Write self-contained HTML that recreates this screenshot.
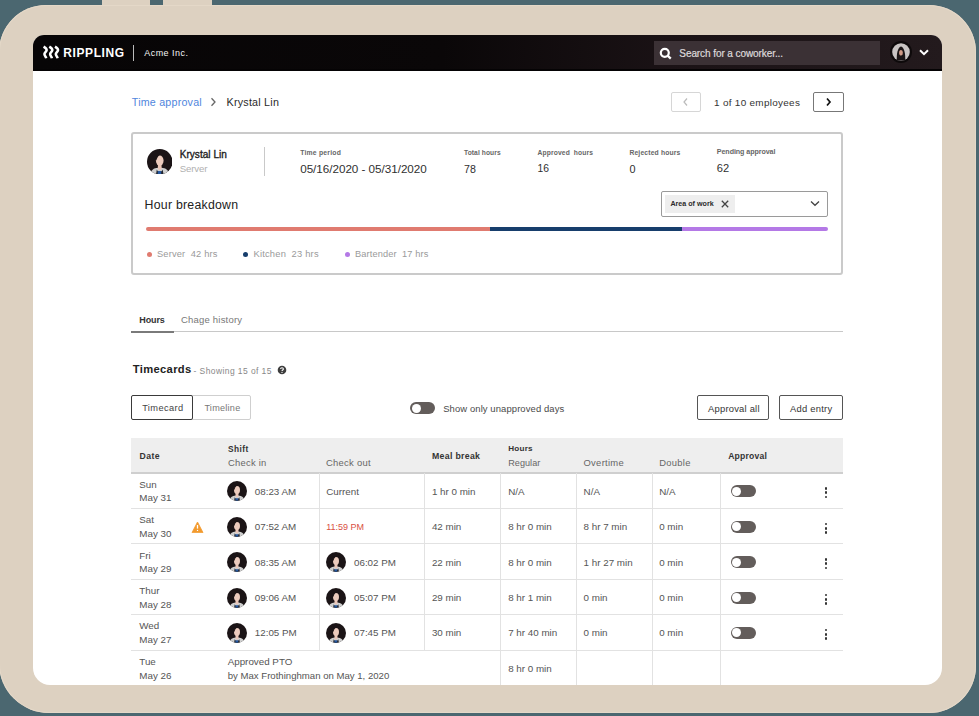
<!DOCTYPE html>
<html><head><meta charset="utf-8">
<style>
html,body{margin:0;padding:0;}
body{width:979px;height:716px;overflow:hidden;position:relative;background:#4b6770;font-family:"Liberation Sans",sans-serif;}
.a{position:absolute;}
.t{position:absolute;white-space:nowrap;font-family:"Liberation Sans",sans-serif;}
.frame{position:absolute;left:-1px;top:5px;width:977px;height:708px;background:#ddd1c1;border-radius:47px 47px 47px 50px;box-shadow:inset 0 0 0 1px #e4d8c8;}
.bump{position:absolute;top:-4px;height:14px;background:#ddd1c1;border-radius:3px;}
.screen{position:absolute;left:33px;top:35px;width:909px;height:650px;background:#fff;border-radius:11px 11px 17px 17px;overflow:hidden;}
.hdr{position:absolute;left:33px;top:35px;width:909px;height:36px;border-radius:11px 11px 0 0;background:linear-gradient(90deg,#070506 0%,#0a0708 45%,#1a1215 70%,#231a1d 100%);border-bottom:0;}
.hline{position:absolute;left:33px;top:69px;width:909px;height:2px;background:#050304;}
.search{position:absolute;left:654px;top:41px;width:226px;height:24px;background:#3b3135;}
.btn{position:absolute;border:1.5px solid #555;border-radius:2px;box-sizing:border-box;background:#fff;}
.card{position:absolute;left:131px;top:132px;width:712px;height:143px;border:2px solid #cacaca;box-sizing:border-box;border-radius:3px;}
.vl{position:absolute;width:1px;background:#e2e2e2;}
.hl{position:absolute;height:1px;background:#e2e2e2;left:131px;width:712px;}
.tog{position:absolute;width:25px;height:12px;border-radius:6px;background:#635d5b;box-sizing:border-box;}
.tog::after{content:"";position:absolute;left:1.5px;top:1.5px;width:9px;height:9px;border-radius:50%;background:#fff;}
.keb{position:absolute;width:3px;height:12px;}
.keb i{position:absolute;left:0;width:2.6px;height:2.6px;border-radius:50%;background:#333;}
</style></head><body>
<div class="bump" style="left:102px;width:48px;"></div>
<div class="bump" style="left:163px;width:49px;"></div>
<div class="frame"></div>
<div class="screen"></div>
<div class="hdr"></div>
<div class="hline"></div>
<!-- logo icon -->
<svg class="a" style="left:40px;top:42px" width="24" height="20" viewBox="0 0 24 20">
<g stroke="#fff" stroke-width="2.5" fill="none" stroke-linecap="butt">
<path d="M3.6 4.6 C5.6 5.8 7 7 6.6 8.4 C6.2 9.8 4.4 10.6 4.4 12 C4.4 13.4 5.8 14.4 6.2 16.2"/>
<path d="M9.3 4.6 C11.3 5.8 12.7 7 12.3 8.4 C11.9 9.8 10.1 10.6 10.1 12 C10.1 13.4 11.5 14.4 11.9 16.2"/>
<path d="M15 4.6 C17 5.8 18.4 7 18 8.4 C17.6 9.8 15.8 10.6 15.8 12 C15.8 13.4 17.2 14.4 17.6 16.2"/>
</g>
</svg>
<div class="a" style="left:133px;top:45px;width:1.3px;height:16px;background:#bbb;"></div>
<div class="search"></div>
<svg class="a" style="left:659px;top:47px" width="14" height="13" viewBox="0 0 14 13">
<circle cx="5.8" cy="5.8" r="4" stroke="#fff" stroke-width="2.2" fill="none"/>
<path d="M8.6 8.6 L11.8 11.6" stroke="#fff" stroke-width="2.2"/>
</svg>
<!-- header avatar -->
<svg class="a" style="left:890px;top:41px" width="22" height="22" viewBox="0 0 22 22">
<circle cx="11" cy="11" r="11" fill="#0e0a0b"/>
<circle cx="11" cy="11" r="8.8" fill="#c9c4c3"/>
<path d="M6.8 19.5 C6.5 13 7.5 6.5 11 5.5 C14.5 6.5 15.5 13 15.2 19.5 Z" fill="#1b1516"/>
<ellipse cx="11" cy="11.8" rx="1.9" ry="2.8" fill="#cf9a86"/>
</svg>
<svg class="a" style="left:918px;top:48px" width="12" height="9" viewBox="0 0 12 9">
<path d="M2 2.2 L6 6.2 L10 2.2" stroke="#fff" stroke-width="2" fill="none"/>
</svg>

<!-- breadcrumb chevron -->
<svg class="a" style="left:209px;top:97px" width="9" height="10" viewBox="0 0 9 10">
<path d="M2.5 1.2 L6 5 L2.5 8.8" stroke="#666" stroke-width="1.3" fill="none"/>
</svg>
<!-- pagination -->
<div class="btn" style="left:671px;top:92px;width:30px;height:20px;border:1.3px solid #d6d6d6;"></div>
<svg class="a" style="left:681px;top:97px" width="9" height="10" viewBox="0 0 9 10">
<path d="M6 1.5 L3 5 L6 8.5" stroke="#bbb" stroke-width="1.2" fill="none"/>
</svg>
<div class="btn" style="left:813px;top:92px;width:31px;height:20px;border:1.3px solid #777;"></div>
<svg class="a" style="left:824px;top:97px" width="9" height="10" viewBox="0 0 9 10">
<path d="M3 1.5 L6 5 L3 8.5" stroke="#111" stroke-width="1.7" fill="none"/>
</svg>

<!-- card -->
<div class="card"></div>
<svg class="a" style="left:146.5px;top:148.5px" width="25.5" height="25.5" viewBox="0 0 26 26">
<defs><clipPath id="cc"><circle cx="13" cy="13" r="13"/></clipPath></defs>
<g clip-path="url(#cc)">
<rect width="26" height="26" fill="#1b1416"/>
<path d="M3 27 C4 20 8 19 13 19 C18 19 22 20 23 27 Z" fill="#cfcfcf"/>
<path d="M10 21 C11 24 15 24 16 21 L17 27 L9 27 Z" fill="#22252e"/>
<rect x="11" y="22.5" width="3.5" height="3" fill="#2457a0"/>
<path d="M11.2 15 L14.8 15 L15 20.5 C14 21.5 12 21.5 11 20.5 Z" fill="#eac6b8"/>
<ellipse cx="13" cy="11.8" rx="3.9" ry="5.2" fill="#eccbbd"/>
<path d="M9 9 C9.5 6 12 5.3 13.5 5.5 C11 7 10.5 9 9.3 12 Z" fill="#1b1416"/>
</g>
</svg>
<div class="a" style="left:264px;top:147px;width:1.3px;height:29px;background:#c9c9c9;"></div>
<!-- dropdown -->
<div class="btn" style="left:661px;top:191px;width:167px;height:26px;border:1.3px solid #9a9a9a;"></div>
<div class="a" style="left:665px;top:195px;width:70px;height:18px;background:#eeeeee;"></div>
<svg class="a" style="left:720px;top:199px" width="10" height="10" viewBox="0 0 10 10">
<path d="M1.8 1.8 L8.2 8.2 M8.2 1.8 L1.8 8.2" stroke="#444" stroke-width="1.3"/>
</svg>
<svg class="a" style="left:809px;top:199px" width="12" height="9" viewBox="0 0 12 9">
<path d="M2 2.5 L6 6.3 L10 2.5" stroke="#444" stroke-width="1.3" fill="none"/>
</svg>
<!-- bar -->
<div class="a" style="left:146px;top:227px;width:345px;height:4px;background:#e07b70;border-radius:2px 0 0 2px;"></div>
<div class="a" style="left:490px;top:227px;width:192px;height:4px;background:#173e6c;"></div>
<div class="a" style="left:682px;top:227px;width:146px;height:4px;background:#b479e6;border-radius:0 2px 2px 0;"></div>
<div class="a" style="left:147px;top:252px;width:5px;height:5px;border-radius:50%;background:#e07b70;"></div>
<div class="a" style="left:243px;top:252px;width:5px;height:5px;border-radius:50%;background:#173e6c;"></div>
<div class="a" style="left:345px;top:252px;width:5px;height:5px;border-radius:50%;background:#b479e6;"></div>

<!-- tabs -->
<div class="a" style="left:131px;top:331px;width:712px;height:1px;background:#c8c8c8;"></div>
<div class="a" style="left:131px;top:330.5px;width:43px;height:2px;background:#7a7a7a;"></div>

<!-- help icon -->
<svg class="a" style="left:277px;top:365px" width="10" height="10" viewBox="0 0 10 10">
<circle cx="5" cy="5" r="4.3" fill="#3d3d3d"/>
<path d="M3.6 4 C3.6 2.4 6.4 2.4 6.4 4 C6.4 5 5 5 5 6" stroke="#fff" stroke-width="1.1" fill="none"/>
<circle cx="5" cy="7.4" r="0.6" fill="#fff"/>
</svg>

<!-- segmented -->
<div class="btn" style="left:131px;top:395px;width:120px;height:25px;border:1.3px solid #cfcfcf;"></div>
<div class="btn" style="left:131px;top:395px;width:62px;height:25px;border:1.7px solid #3a3a3a;"></div>
<!-- toggle -->
<div class="tog" style="left:410px;top:402px;"></div>
<!-- buttons -->
<div class="btn" style="left:697px;top:395px;width:72px;height:25px;"></div>
<div class="btn" style="left:779px;top:395px;width:64px;height:25px;"></div>

<!-- table -->
<div class="a" style="left:131px;top:438px;width:712px;height:34px;background:#eeeeee;"></div>
<div class="a" style="left:131px;top:472px;width:712px;height:1.5px;background:#cfcfcf;"></div>
<div class="hl" style="top:507.9px;"></div>
<div class="hl" style="top:543.1px;"></div>
<div class="hl" style="top:578.7px;"></div>
<div class="hl" style="top:613.8px;"></div>
<div class="hl" style="top:649.5px;"></div>
<div class="vl" style="left:318.5px;top:473px;height:177px;"></div>
<div class="vl" style="left:423.5px;top:473px;height:177px;"></div>
<div class="vl" style="left:499.5px;top:473px;height:177px;"></div>
<div class="vl" style="left:575.5px;top:473px;height:177px;"></div>
<div class="vl" style="left:651.5px;top:473px;height:177px;"></div>
<div class="vl" style="left:719.5px;top:473px;height:177px;"></div>
<div class="vl" style="left:499.5px;top:650px;height:35px;"></div>
<div class="vl" style="left:575.5px;top:650px;height:35px;"></div>
<div class="vl" style="left:651.5px;top:650px;height:35px;"></div>
<div class="vl" style="left:719.5px;top:650px;height:35px;"></div>
<svg class="a" style="left:227px;top:481.0px" width="20" height="20" viewBox="0 0 26 26"><defs><clipPath id="ca0"><circle cx="13" cy="13" r="13"/></clipPath></defs><g clip-path="url(#ca0)"><rect width="26" height="26" fill="#1b1416"/><path d="M3 27 C4 20 8 19 13 19 C18 19 22 20 23 27 Z" fill="#cfcfcf"/><path d="M10 21 C11 24 15 24 16 21 L17 27 L9 27 Z" fill="#22252e"/><rect x="11" y="22.5" width="3.5" height="3" fill="#2457a0"/><path d="M11.2 15 L14.8 15 L15 20.5 C14 21.5 12 21.5 11 20.5 Z" fill="#eac6b8"/><ellipse cx="13" cy="11.8" rx="3.9" ry="5.2" fill="#eccbbd"/><path d="M9 9 C9.5 6 12 5.3 13.5 5.5 C11 7 10.5 9 9.3 12 Z" fill="#1b1416"/></g></svg>
<div class="tog" style="left:730.5px;top:485.0px;"></div>
<div class="keb" style="left:824.5px;top:487.0px;"><i style="top:0"></i><i style="top:4.3px"></i><i style="top:8.6px"></i></div>
<svg class="a" style="left:227px;top:516.9px" width="20" height="20" viewBox="0 0 26 26"><defs><clipPath id="ca1"><circle cx="13" cy="13" r="13"/></clipPath></defs><g clip-path="url(#ca1)"><rect width="26" height="26" fill="#1b1416"/><path d="M3 27 C4 20 8 19 13 19 C18 19 22 20 23 27 Z" fill="#cfcfcf"/><path d="M10 21 C11 24 15 24 16 21 L17 27 L9 27 Z" fill="#22252e"/><rect x="11" y="22.5" width="3.5" height="3" fill="#2457a0"/><path d="M11.2 15 L14.8 15 L15 20.5 C14 21.5 12 21.5 11 20.5 Z" fill="#eac6b8"/><ellipse cx="13" cy="11.8" rx="3.9" ry="5.2" fill="#eccbbd"/><path d="M9 9 C9.5 6 12 5.3 13.5 5.5 C11 7 10.5 9 9.3 12 Z" fill="#1b1416"/></g></svg>
<div class="tog" style="left:730.5px;top:520.9px;"></div>
<div class="keb" style="left:824.5px;top:522.9px;"><i style="top:0"></i><i style="top:4.3px"></i><i style="top:8.6px"></i></div>
<svg class="a" style="left:227px;top:552.1px" width="20" height="20" viewBox="0 0 26 26"><defs><clipPath id="ca2"><circle cx="13" cy="13" r="13"/></clipPath></defs><g clip-path="url(#ca2)"><rect width="26" height="26" fill="#1b1416"/><path d="M3 27 C4 20 8 19 13 19 C18 19 22 20 23 27 Z" fill="#cfcfcf"/><path d="M10 21 C11 24 15 24 16 21 L17 27 L9 27 Z" fill="#22252e"/><rect x="11" y="22.5" width="3.5" height="3" fill="#2457a0"/><path d="M11.2 15 L14.8 15 L15 20.5 C14 21.5 12 21.5 11 20.5 Z" fill="#eac6b8"/><ellipse cx="13" cy="11.8" rx="3.9" ry="5.2" fill="#eccbbd"/><path d="M9 9 C9.5 6 12 5.3 13.5 5.5 C11 7 10.5 9 9.3 12 Z" fill="#1b1416"/></g></svg>
<svg class="a" style="left:326px;top:552.1px" width="20" height="20" viewBox="0 0 26 26"><defs><clipPath id="cb2"><circle cx="13" cy="13" r="13"/></clipPath></defs><g clip-path="url(#cb2)"><rect width="26" height="26" fill="#1b1416"/><path d="M3 27 C4 20 8 19 13 19 C18 19 22 20 23 27 Z" fill="#cfcfcf"/><path d="M10 21 C11 24 15 24 16 21 L17 27 L9 27 Z" fill="#22252e"/><rect x="11" y="22.5" width="3.5" height="3" fill="#2457a0"/><path d="M11.2 15 L14.8 15 L15 20.5 C14 21.5 12 21.5 11 20.5 Z" fill="#eac6b8"/><ellipse cx="13" cy="11.8" rx="3.9" ry="5.2" fill="#eccbbd"/><path d="M9 9 C9.5 6 12 5.3 13.5 5.5 C11 7 10.5 9 9.3 12 Z" fill="#1b1416"/></g></svg>
<div class="tog" style="left:730.5px;top:556.1px;"></div>
<div class="keb" style="left:824.5px;top:558.1px;"><i style="top:0"></i><i style="top:4.3px"></i><i style="top:8.6px"></i></div>
<svg class="a" style="left:227px;top:587.7px" width="20" height="20" viewBox="0 0 26 26"><defs><clipPath id="ca3"><circle cx="13" cy="13" r="13"/></clipPath></defs><g clip-path="url(#ca3)"><rect width="26" height="26" fill="#1b1416"/><path d="M3 27 C4 20 8 19 13 19 C18 19 22 20 23 27 Z" fill="#cfcfcf"/><path d="M10 21 C11 24 15 24 16 21 L17 27 L9 27 Z" fill="#22252e"/><rect x="11" y="22.5" width="3.5" height="3" fill="#2457a0"/><path d="M11.2 15 L14.8 15 L15 20.5 C14 21.5 12 21.5 11 20.5 Z" fill="#eac6b8"/><ellipse cx="13" cy="11.8" rx="3.9" ry="5.2" fill="#eccbbd"/><path d="M9 9 C9.5 6 12 5.3 13.5 5.5 C11 7 10.5 9 9.3 12 Z" fill="#1b1416"/></g></svg>
<svg class="a" style="left:326px;top:587.7px" width="20" height="20" viewBox="0 0 26 26"><defs><clipPath id="cb3"><circle cx="13" cy="13" r="13"/></clipPath></defs><g clip-path="url(#cb3)"><rect width="26" height="26" fill="#1b1416"/><path d="M3 27 C4 20 8 19 13 19 C18 19 22 20 23 27 Z" fill="#cfcfcf"/><path d="M10 21 C11 24 15 24 16 21 L17 27 L9 27 Z" fill="#22252e"/><rect x="11" y="22.5" width="3.5" height="3" fill="#2457a0"/><path d="M11.2 15 L14.8 15 L15 20.5 C14 21.5 12 21.5 11 20.5 Z" fill="#eac6b8"/><ellipse cx="13" cy="11.8" rx="3.9" ry="5.2" fill="#eccbbd"/><path d="M9 9 C9.5 6 12 5.3 13.5 5.5 C11 7 10.5 9 9.3 12 Z" fill="#1b1416"/></g></svg>
<div class="tog" style="left:730.5px;top:591.7px;"></div>
<div class="keb" style="left:824.5px;top:593.7px;"><i style="top:0"></i><i style="top:4.3px"></i><i style="top:8.6px"></i></div>
<svg class="a" style="left:227px;top:622.8px" width="20" height="20" viewBox="0 0 26 26"><defs><clipPath id="ca4"><circle cx="13" cy="13" r="13"/></clipPath></defs><g clip-path="url(#ca4)"><rect width="26" height="26" fill="#1b1416"/><path d="M3 27 C4 20 8 19 13 19 C18 19 22 20 23 27 Z" fill="#cfcfcf"/><path d="M10 21 C11 24 15 24 16 21 L17 27 L9 27 Z" fill="#22252e"/><rect x="11" y="22.5" width="3.5" height="3" fill="#2457a0"/><path d="M11.2 15 L14.8 15 L15 20.5 C14 21.5 12 21.5 11 20.5 Z" fill="#eac6b8"/><ellipse cx="13" cy="11.8" rx="3.9" ry="5.2" fill="#eccbbd"/><path d="M9 9 C9.5 6 12 5.3 13.5 5.5 C11 7 10.5 9 9.3 12 Z" fill="#1b1416"/></g></svg>
<svg class="a" style="left:326px;top:622.8px" width="20" height="20" viewBox="0 0 26 26"><defs><clipPath id="cb4"><circle cx="13" cy="13" r="13"/></clipPath></defs><g clip-path="url(#cb4)"><rect width="26" height="26" fill="#1b1416"/><path d="M3 27 C4 20 8 19 13 19 C18 19 22 20 23 27 Z" fill="#cfcfcf"/><path d="M10 21 C11 24 15 24 16 21 L17 27 L9 27 Z" fill="#22252e"/><rect x="11" y="22.5" width="3.5" height="3" fill="#2457a0"/><path d="M11.2 15 L14.8 15 L15 20.5 C14 21.5 12 21.5 11 20.5 Z" fill="#eac6b8"/><ellipse cx="13" cy="11.8" rx="3.9" ry="5.2" fill="#eccbbd"/><path d="M9 9 C9.5 6 12 5.3 13.5 5.5 C11 7 10.5 9 9.3 12 Z" fill="#1b1416"/></g></svg>
<div class="tog" style="left:730.5px;top:626.8px;"></div>
<div class="keb" style="left:824.5px;top:628.8px;"><i style="top:0"></i><i style="top:4.3px"></i><i style="top:8.6px"></i></div>
<svg class="a" style="left:191px;top:521px" width="13" height="12" viewBox="0 0 13 12"><path d="M6.5 1 L12 11.6 L1 11.6 Z" fill="#f29a2e" stroke="#f29a2e" stroke-width="0.8" stroke-linejoin="round"/><path d="M6.5 4 L6.5 7.6" stroke="#fff" stroke-width="1.3"/><circle cx="6.5" cy="9.4" r="0.7" fill="#fff"/></svg>

<div class="t" style="left:63.30px;top:46.55px;font-size:11.99px;line-height:11.99px;font-weight:bold;color:#ffffff;letter-spacing:0.603px;white-space:pre;">RIPPLING</div>
<div class="t" style="left:144.20px;top:48.71px;font-size:8.97px;line-height:8.97px;font-weight:normal;color:#f4f4f4;letter-spacing:0.49px;white-space:pre;">Acme Inc.</div>
<div class="t" style="left:679.30px;top:48.98px;font-size:10.06px;line-height:10.06px;font-weight:normal;color:#dedadb;letter-spacing:-0.1px;white-space:pre;-webkit-text-stroke:0.2px #dedadb;">Search for a coworker...</div>
<div class="t" style="left:131.80px;top:96.95px;font-size:10.69px;line-height:10.69px;font-weight:normal;color:#4f86dd;letter-spacing:0.213px;white-space:pre;">Time approval</div>
<div class="t" style="left:226.60px;top:96.93px;font-size:10.72px;line-height:10.72px;font-weight:normal;color:#2a2a2a;letter-spacing:0.222px;white-space:pre;">Krystal Lin</div>
<div class="t" style="left:714.10px;top:97.58px;font-size:9.95px;line-height:9.95px;font-weight:normal;color:#333;letter-spacing:0.285px;white-space:pre;">1 of 10 employees</div>
<div class="t" style="left:179.70px;top:149.99px;font-size:10.05px;line-height:10.05px;font-weight:normal;color:#222;letter-spacing:0.028px;white-space:pre;-webkit-text-stroke:0.35px #222;">Krystal Lin</div>
<div class="t" style="left:179.70px;top:164.21px;font-size:9.68px;line-height:9.68px;font-weight:normal;color:#b0b0b0;letter-spacing:-0.133px;white-space:pre;">Server</div>
<div class="t" style="left:300.20px;top:149.51px;font-size:6.84px;line-height:6.84px;font-weight:bold;color:#666;letter-spacing:0.21px;white-space:pre;">Time period</div>
<div class="t" style="left:300.20px;top:162.81px;font-size:11.68px;line-height:11.68px;font-weight:normal;color:#2f2f2f;letter-spacing:-0.028px;white-space:pre;">05/16/2020 - 05/31/2020</div>
<div class="t" style="left:464.00px;top:149.66px;font-size:6.66px;line-height:6.66px;font-weight:bold;color:#666;letter-spacing:0.086px;white-space:pre;">Total hours</div>
<div class="t" style="left:464.00px;top:163.69px;font-size:10.64px;line-height:10.64px;font-weight:normal;color:#2f2f2f;letter-spacing:0px;white-space:pre;">78</div>
<div class="t" style="left:537.60px;top:149.62px;font-size:6.71px;line-height:6.71px;font-weight:bold;color:#666;letter-spacing:0.121px;white-space:pre;">Approved  hours</div>
<div class="t" style="left:537.60px;top:163.98px;font-size:10.3px;line-height:10.3px;font-weight:normal;color:#2f2f2f;letter-spacing:0px;white-space:pre;">16</div>
<div class="t" style="left:629.40px;top:149.56px;font-size:6.78px;line-height:6.78px;font-weight:bold;color:#666;letter-spacing:0.161px;white-space:pre;">Rejected hours</div>
<div class="t" style="left:629.40px;top:163.54px;font-size:10.82px;line-height:10.82px;font-weight:normal;color:#2f2f2f;letter-spacing:0px;white-space:pre;">0</div>
<div class="t" style="left:716.80px;top:148.97px;font-size:7.12px;line-height:7.12px;font-weight:bold;color:#666;letter-spacing:-0.065px;white-space:pre;">Pending approval</div>
<div class="t" style="left:716.80px;top:162.57px;font-size:11.14px;line-height:11.14px;font-weight:normal;color:#2f2f2f;letter-spacing:0px;white-space:pre;">62</div>
<div class="t" style="left:144.60px;top:198.69px;font-size:12.3px;line-height:12.3px;font-weight:normal;color:#222;letter-spacing:0.247px;white-space:pre;">Hour breakdown</div>
<div class="t" style="left:670.40px;top:201.47px;font-size:7.12px;line-height:7.12px;font-weight:bold;color:#2a2a2a;letter-spacing:0.017px;white-space:pre;">Area of work</div>
<div class="t" style="left:157.00px;top:249.94px;font-size:9.29px;line-height:9.29px;font-weight:normal;color:#9a9a9a;letter-spacing:0.158px;white-space:pre;white-space:pre;">Server  42 hrs</div>
<div class="t" style="left:253.50px;top:249.88px;font-size:9.36px;line-height:9.36px;font-weight:normal;color:#9a9a9a;letter-spacing:0.196px;white-space:pre;white-space:pre;">Kitchen  23 hrs</div>
<div class="t" style="left:355.10px;top:249.99px;font-size:9.23px;line-height:9.23px;font-weight:normal;color:#9a9a9a;letter-spacing:0.124px;white-space:pre;white-space:pre;">Bartender  17 hrs</div>
<div class="t" style="left:139.30px;top:315.69px;font-size:8.99px;line-height:8.99px;font-weight:bold;color:#333;letter-spacing:-0.115px;white-space:pre;">Hours</div>
<div class="t" style="left:181.00px;top:315.26px;font-size:9.5px;line-height:9.5px;font-weight:normal;color:#777;letter-spacing:0.203px;white-space:pre;">Chage history</div>
<div class="t" style="left:132.80px;top:364.33px;font-size:11.19px;line-height:11.19px;font-weight:bold;color:#222;letter-spacing:0.332px;white-space:pre;">Timecards</div>
<div class="t" style="left:193.60px;top:366.63px;font-size:8.47px;line-height:8.47px;font-weight:normal;color:#888;letter-spacing:0.423px;white-space:pre;">- Showing 15 of 15</div>
<div class="t" style="left:142.20px;top:404.06px;font-size:9.26px;line-height:9.26px;font-weight:normal;color:#444;letter-spacing:0.377px;white-space:pre;">Timecard</div>
<div class="t" style="left:204.40px;top:404.18px;font-size:9.12px;line-height:9.12px;font-weight:normal;color:#777;letter-spacing:0.255px;white-space:pre;">Timeline</div>
<div class="t" style="left:443.20px;top:403.99px;font-size:9.46px;line-height:9.46px;font-weight:normal;color:#4a4a4a;letter-spacing:0.094px;white-space:pre;">Show only unapproved days</div>
<div class="t" style="left:708.00px;top:403.73px;font-size:9.42px;line-height:9.42px;font-weight:normal;color:#333;letter-spacing:0.213px;white-space:pre;">Approval all</div>
<div class="t" style="left:790.00px;top:403.74px;font-size:9.4px;line-height:9.4px;font-weight:normal;color:#333;letter-spacing:0.257px;white-space:pre;">Add entry</div>
<div class="t" style="left:139.60px;top:451.64px;font-size:8.69px;line-height:8.69px;font-weight:bold;color:#333;letter-spacing:0.409px;white-space:pre;">Date</div>
<div class="t" style="left:227.90px;top:444.77px;font-size:8.3px;line-height:8.3px;font-weight:bold;color:#333;letter-spacing:0.507px;white-space:pre;">Shift</div>
<div class="t" style="left:227.90px;top:458.23px;font-size:9.41px;line-height:9.41px;font-weight:normal;color:#666;letter-spacing:0.262px;white-space:pre;">Check in</div>
<div class="t" style="left:326.00px;top:458.22px;font-size:9.43px;line-height:9.43px;font-weight:normal;color:#666;letter-spacing:0.275px;white-space:pre;">Check out</div>
<div class="t" style="left:432.00px;top:451.60px;font-size:8.74px;line-height:8.74px;font-weight:bold;color:#333;letter-spacing:0.312px;white-space:pre;">Meal break</div>
<div class="t" style="left:508.20px;top:444.93px;font-size:8.12px;line-height:8.12px;font-weight:bold;color:#333;letter-spacing:0.245px;white-space:pre;">Hours</div>
<div class="t" style="left:508.20px;top:458.51px;font-size:9.08px;line-height:9.08px;font-weight:normal;color:#666;letter-spacing:0.055px;white-space:pre;">Regular</div>
<div class="t" style="left:583.50px;top:458.22px;font-size:9.43px;line-height:9.43px;font-weight:normal;color:#666;letter-spacing:0.289px;white-space:pre;">Overtime</div>
<div class="t" style="left:659.20px;top:458.25px;font-size:9.39px;line-height:9.39px;font-weight:normal;color:#666;letter-spacing:0.301px;white-space:pre;">Double</div>
<div class="t" style="left:728.20px;top:451.72px;font-size:8.6px;line-height:8.6px;font-weight:bold;color:#333;letter-spacing:0.22px;white-space:pre;">Approval</div>
<div class="t" style="left:139.30px;top:479.50px;font-size:9.8px;line-height:9.8px;font-weight:normal;color:#555;letter-spacing:0px;white-space:pre;">Sun</div>
<div class="t" style="left:139.30px;top:493.20px;font-size:9.8px;line-height:9.8px;font-weight:normal;color:#555;letter-spacing:0px;white-space:pre;">May 31</div>
<div class="t" style="left:254.80px;top:486.50px;font-size:9.8px;line-height:9.8px;font-weight:normal;color:#555;letter-spacing:0px;white-space:pre;">08:23 AM</div>
<div class="t" style="left:326.20px;top:486.50px;font-size:9.8px;line-height:9.8px;font-weight:normal;color:#555;letter-spacing:0px;white-space:pre;">Current</div>
<div class="t" style="left:431.90px;top:486.50px;font-size:9.8px;line-height:9.8px;font-weight:normal;color:#555;letter-spacing:0px;white-space:pre;">1 hr 0 min</div>
<div class="t" style="left:508.20px;top:486.50px;font-size:9.8px;line-height:9.8px;font-weight:normal;color:#555;letter-spacing:0px;white-space:pre;">N/A</div>
<div class="t" style="left:583.60px;top:486.50px;font-size:9.8px;line-height:9.8px;font-weight:normal;color:#555;letter-spacing:0px;white-space:pre;">N/A</div>
<div class="t" style="left:659.20px;top:486.50px;font-size:9.8px;line-height:9.8px;font-weight:normal;color:#555;letter-spacing:0px;white-space:pre;">N/A</div>
<div class="t" style="left:139.30px;top:515.40px;font-size:9.8px;line-height:9.8px;font-weight:normal;color:#555;letter-spacing:0px;white-space:pre;">Sat</div>
<div class="t" style="left:139.30px;top:529.10px;font-size:9.8px;line-height:9.8px;font-weight:normal;color:#555;letter-spacing:0px;white-space:pre;">May 30</div>
<div class="t" style="left:254.80px;top:522.40px;font-size:9.8px;line-height:9.8px;font-weight:normal;color:#555;letter-spacing:0px;white-space:pre;">07:52 AM</div>
<div class="t" style="left:326.20px;top:523.08px;font-size:9.0px;line-height:9.0px;font-weight:normal;color:#d9503f;letter-spacing:0px;white-space:pre;">11:59 PM</div>
<div class="t" style="left:431.90px;top:522.40px;font-size:9.8px;line-height:9.8px;font-weight:normal;color:#555;letter-spacing:0px;white-space:pre;">42 min</div>
<div class="t" style="left:508.20px;top:522.40px;font-size:9.8px;line-height:9.8px;font-weight:normal;color:#555;letter-spacing:0px;white-space:pre;">8 hr 0 min</div>
<div class="t" style="left:583.60px;top:522.40px;font-size:9.8px;line-height:9.8px;font-weight:normal;color:#555;letter-spacing:0px;white-space:pre;">8 hr 7 min</div>
<div class="t" style="left:659.20px;top:522.40px;font-size:9.8px;line-height:9.8px;font-weight:normal;color:#555;letter-spacing:0px;white-space:pre;">0 min</div>
<div class="t" style="left:139.30px;top:550.60px;font-size:9.8px;line-height:9.8px;font-weight:normal;color:#555;letter-spacing:0px;white-space:pre;">Fri</div>
<div class="t" style="left:139.30px;top:564.30px;font-size:9.8px;line-height:9.8px;font-weight:normal;color:#555;letter-spacing:0px;white-space:pre;">May 29</div>
<div class="t" style="left:254.80px;top:557.60px;font-size:9.8px;line-height:9.8px;font-weight:normal;color:#555;letter-spacing:0px;white-space:pre;">08:35 AM</div>
<div class="t" style="left:354.00px;top:557.60px;font-size:9.8px;line-height:9.8px;font-weight:normal;color:#555;letter-spacing:0px;white-space:pre;">06:02 PM</div>
<div class="t" style="left:431.90px;top:557.60px;font-size:9.8px;line-height:9.8px;font-weight:normal;color:#555;letter-spacing:0px;white-space:pre;">22 min</div>
<div class="t" style="left:508.20px;top:557.60px;font-size:9.8px;line-height:9.8px;font-weight:normal;color:#555;letter-spacing:0px;white-space:pre;">8 hr 0 min</div>
<div class="t" style="left:583.60px;top:557.60px;font-size:9.8px;line-height:9.8px;font-weight:normal;color:#555;letter-spacing:0px;white-space:pre;">1 hr 27 min</div>
<div class="t" style="left:659.20px;top:557.60px;font-size:9.8px;line-height:9.8px;font-weight:normal;color:#555;letter-spacing:0px;white-space:pre;">0 min</div>
<div class="t" style="left:139.30px;top:586.20px;font-size:9.8px;line-height:9.8px;font-weight:normal;color:#555;letter-spacing:0px;white-space:pre;">Thur</div>
<div class="t" style="left:139.30px;top:599.90px;font-size:9.8px;line-height:9.8px;font-weight:normal;color:#555;letter-spacing:0px;white-space:pre;">May 28</div>
<div class="t" style="left:254.80px;top:593.20px;font-size:9.8px;line-height:9.8px;font-weight:normal;color:#555;letter-spacing:0px;white-space:pre;">09:06 AM</div>
<div class="t" style="left:354.00px;top:593.20px;font-size:9.8px;line-height:9.8px;font-weight:normal;color:#555;letter-spacing:0px;white-space:pre;">05:07 PM</div>
<div class="t" style="left:431.90px;top:593.20px;font-size:9.8px;line-height:9.8px;font-weight:normal;color:#555;letter-spacing:0px;white-space:pre;">29 min</div>
<div class="t" style="left:508.20px;top:593.20px;font-size:9.8px;line-height:9.8px;font-weight:normal;color:#555;letter-spacing:0px;white-space:pre;">8 hr 1 min</div>
<div class="t" style="left:583.60px;top:593.20px;font-size:9.8px;line-height:9.8px;font-weight:normal;color:#555;letter-spacing:0px;white-space:pre;">0 min</div>
<div class="t" style="left:659.20px;top:593.20px;font-size:9.8px;line-height:9.8px;font-weight:normal;color:#555;letter-spacing:0px;white-space:pre;">0 min</div>
<div class="t" style="left:139.30px;top:621.30px;font-size:9.8px;line-height:9.8px;font-weight:normal;color:#555;letter-spacing:0px;white-space:pre;">Wed</div>
<div class="t" style="left:139.30px;top:635.00px;font-size:9.8px;line-height:9.8px;font-weight:normal;color:#555;letter-spacing:0px;white-space:pre;">May 27</div>
<div class="t" style="left:254.80px;top:628.30px;font-size:9.8px;line-height:9.8px;font-weight:normal;color:#555;letter-spacing:0px;white-space:pre;">12:05 PM</div>
<div class="t" style="left:354.00px;top:628.30px;font-size:9.8px;line-height:9.8px;font-weight:normal;color:#555;letter-spacing:0px;white-space:pre;">07:45 PM</div>
<div class="t" style="left:431.90px;top:628.30px;font-size:9.8px;line-height:9.8px;font-weight:normal;color:#555;letter-spacing:0px;white-space:pre;">30 min</div>
<div class="t" style="left:508.20px;top:628.30px;font-size:9.8px;line-height:9.8px;font-weight:normal;color:#555;letter-spacing:0px;white-space:pre;">7 hr 40 min</div>
<div class="t" style="left:583.60px;top:628.30px;font-size:9.8px;line-height:9.8px;font-weight:normal;color:#555;letter-spacing:0px;white-space:pre;">0 min</div>
<div class="t" style="left:659.20px;top:628.30px;font-size:9.8px;line-height:9.8px;font-weight:normal;color:#555;letter-spacing:0px;white-space:pre;">0 min</div>
<div class="t" style="left:139.30px;top:657.00px;font-size:9.8px;line-height:9.8px;font-weight:normal;color:#555;letter-spacing:0px;white-space:pre;">Tue</div>
<div class="t" style="left:139.30px;top:670.70px;font-size:9.8px;line-height:9.8px;font-weight:normal;color:#555;letter-spacing:0px;white-space:pre;">May 26</div>
<div class="t" style="left:227.70px;top:657.00px;font-size:9.8px;line-height:9.8px;font-weight:normal;color:#555;letter-spacing:0px;white-space:pre;">Approved PTO</div>
<div class="t" style="left:227.70px;top:670.87px;font-size:9.6px;line-height:9.6px;font-weight:normal;color:#555;letter-spacing:0px;white-space:pre;">by Max Frothinghman on May 1, 2020</div>
<div class="t" style="left:508.20px;top:664.00px;font-size:9.8px;line-height:9.8px;font-weight:normal;color:#555;letter-spacing:0px;white-space:pre;">8 hr 0 min</div>
</body></html>
